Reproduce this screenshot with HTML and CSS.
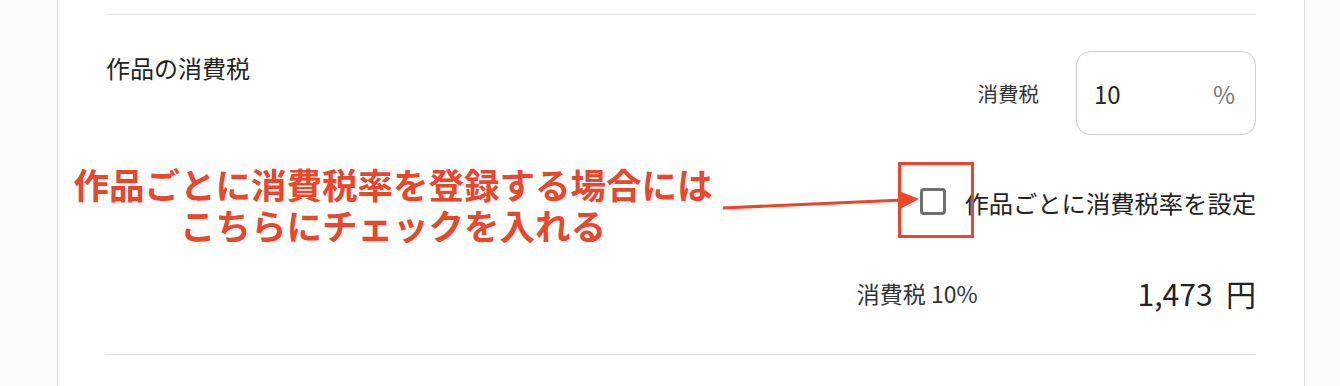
FILE: index.html
```html
<!DOCTYPE html>
<html lang="ja">
<head>
    <meta charset="UTF-8">
    <meta name="viewport" content="width=device-width, initial-scale=1.0">
    <title>作品の消費税</title>
    <link rel="stylesheet" href="styles.css">
</head>
<body>
    <div class="card">
        <section class="tax-section">
            <h2 class="tax-title">作品の消費税</h2>
            <div class="tax-body">
                <div class="rate-row">
                    <label class="rate-label" for="tax-rate">消費税</label>
                    <div class="rate-input">
                        <input type="text" id="tax-rate" value="10">
                        <span class="unit">%</span>
                    </div>
                </div>
                <div class="checkbox-row">
                    <span class="checkbox"></span>
                    <span class="checkbox-label">作品ごとに消費税率を設定</span>
                </div>
                <div class="total-row">
                    <span class="total-label">消費税 10%</span>
                    <span class="total-value">1,473&nbsp;&nbsp;円</span>
                </div>
            </div>
        </section>
    </div>

    <!-- 説明用の注釈 -->
    <div class="note">
        <p class="note-text">作品ごとに消費税率を登録する場合には<br>こちらにチェックを入れる</p>
        <svg class="note-arrow" width="200" height="24" viewBox="0 0 200 24">
            <line x1="2" y1="18" x2="182" y2="10" stroke="#e9462b" stroke-width="3.2"/>
            <polygon points="178,1 198,9 179,19" fill="#e9462b"/>
        </svg>
        <div class="note-box"></div>
    </div>
</body>
</html>
```

FILE: styles.css
```css
body {
    margin: 0;
    background-color: #fcfcfa;
    font-family: "Noto Sans CJK JP", "Noto Sans", sans-serif;
    color: #333;
    height: 386px;
    overflow: hidden;
    position: relative;
}
.card {
    margin-left: 57px;
    width: 1248px;
    height: 386px;
    box-sizing: border-box;
    background-color: #fff;
    border-left: 1px solid #dedede;
    border-right: 1px solid #dedede;
    padding: 14px 48px 0;
}
.tax-section {
    border-top: 1px solid #e2e2e2;
    border-bottom: 1px solid #e2e2e2;
    display: flex;
    justify-content: space-between;
    padding: 36px 0 41px;
}
.tax-title {
    margin: 1px 0 0;
    font-size: 24px;
    font-weight: normal;
    line-height: 32px;
    color: #222;
}
.tax-body {
    display: flex;
    flex-direction: column;
    align-items: flex-end;
}
.rate-row {
    display: flex;
    align-items: center;
    gap: 37px;
}
.rate-label {
    font-size: 20.5px;
    color: #333;
}
.rate-input {
    display: flex;
    align-items: center;
    width: 180px;
    height: 84px;
    box-sizing: border-box;
    border: 1px solid #cccccc;
    border-radius: 14px;
    padding: 0 20px 0 17px;
}
.rate-input input {
    border: none;
    outline: none;
    width: 100px;
    flex: 1;
    padding: 0;
    font-family: inherit;
    font-size: 24px;
    color: #222;
}
.unit {
    font-size: 24px;
    color: #777;
}
.checkbox-row {
    display: flex;
    align-items: center;
    margin-top: 52px;
    height: 30px;
}
.checkbox {
    width: 26px;
    height: 27px;
    box-sizing: border-box;
    border: 3px solid #6e6e6e;
    border-radius: 4px;
    margin: 0 18px 2px 0;
}
.checkbox-label {
    font-size: 24.3px;
    color: #222;
}
.total-row {
    display: flex;
    align-items: center;
    gap: 160px;
    margin-top: 56px;
    height: 40px;
}
.total-label {
    font-size: 23px;
}
.total-value {
    font-size: 30px;
    color: #222;
}
.note {
    position: absolute;
    left: 0;
    top: 0;
    width: 100%;
    height: 100%;
    pointer-events: none;
}
.note-text {
    position: absolute;
    left: 60px;
    top: 163px;
    width: 666px;
    margin: 0;
    text-align: center;
    font-size: 35.5px;
    font-weight: bold;
    line-height: 41px;
    color: #e9462b;
}
.note-arrow {
    position: absolute;
    left: 721px;
    top: 190px;
}
.note-box {
    position: absolute;
    left: 898px;
    top: 162px;
    width: 70px;
    height: 70px;
    border: 3px solid #e9462b;
}
```
